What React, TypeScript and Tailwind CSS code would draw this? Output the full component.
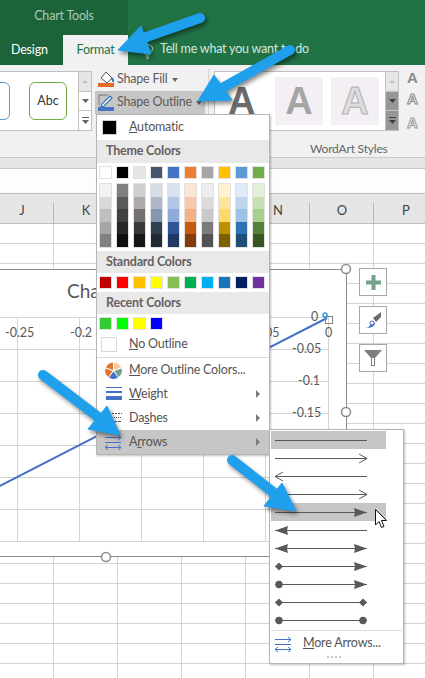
const font = "font-['Lato','Roboto',sans-serif]";
const menuText = "text-[12.5px] tracking-[-0.2px]";

const columns = ["J", "K", "L", "M", "N", "O", "P"];
const rows = Array.from({ length: 23 }, (_, i) => i);

const themeColors = ["#ffffff", "#000000", "#e7e6e6", "#44546a", "#4472c4", "#ed7d31", "#a5a5a5", "#ffc000", "#5b9bd5", "#70ad47"];
const themeShades = [
  ["#f2f2f2", "#d9d9d9", "#bfbfbf", "#a6a6a6", "#808080"],
  ["#7f7f7f", "#595959", "#404040", "#262626", "#0d0d0d"],
  ["#d0cece", "#aeaaaa", "#757070", "#3a3838", "#171616"],
  ["#d6dce4", "#adb9ca", "#8497b0", "#323f4f", "#222b35"],
  ["#d9e2f3", "#b4c6e7", "#8eaadb", "#2f5496", "#1f3864"],
  ["#fbe5d5", "#f7caac", "#f4b183", "#c55a11", "#833c0b"],
  ["#ededed", "#dbdbdb", "#c9c9c9", "#7b7b7b", "#525252"],
  ["#fff2cc", "#fee599", "#ffd965", "#bf9000", "#7f6000"],
  ["#deeaf6", "#bdd6ee", "#9cc2e5", "#2e74b5", "#1f4e79"],
  ["#e2efd9", "#c5e0b3", "#a8d08d", "#538135", "#375623"],
];
const standardColors = ["#c00000", "#ff0000", "#ffc000", "#ffff00", "#85bf55", "#00b050", "#00b0f0", "#1a75bb", "#002060", "#7030a0"];
const recentColors = ["#32cd32", "#00ff00", "#ffff00", "#0000ff"];

type Head = "none" | "open" | "fill" | "diamond" | "dot";
const arrowStyles: { l: Head; r: Head; on?: boolean }[] = [
  { l: "none", r: "none", on: true },
  { l: "none", r: "open" },
  { l: "open", r: "none" },
  { l: "none", r: "open" },
  { l: "none", r: "fill", on: true },
  { l: "fill", r: "none" },
  { l: "fill", r: "fill" },
  { l: "diamond", r: "fill" },
  { l: "dot", r: "fill" },
  { l: "diamond", r: "diamond" },
  { l: "dot", r: "dot" },
];

function Swatch({ color }: { color: string }) {
  return <div className="w-[13px] h-[13px] border border-[#e1e1e1]" style={{ backgroundColor: color }} />;
}

function MenuHeader({ children }: { children: string }) {
  return (
    <div className={`h-[22px] bg-[#e9e9e9] pl-[9px] flex items-center font-bold text-[#666060] ${menuText}`}>
      {children}
    </div>
  );
}

function Caret() {
  return <div className="w-0 h-0 border-y-[4px] border-y-transparent border-l-[4px] border-l-[#7a7a7a]" />;
}

function MenuRow({ icon, children, sub, active }: { icon?: React.ReactNode; children: React.ReactNode; sub?: boolean; active?: boolean }) {
  return (
    <div className={`h-6 flex items-center text-[#555] ${menuText} ${active ? "bg-[#c6c6c6]" : ""}`}>
      <div className="w-[32px] flex justify-center pl-[1px]">{icon}</div>
      <div className="flex-1">{children}</div>
      {sub && <div className="mr-[9px]"><Caret /></div>}
    </div>
  );
}

function ArrowsIcon() {
  return (
    <svg width="17" height="16" viewBox="0 0 17 16" fill="none" stroke="#4472c4" strokeWidth="1">
      <path d="M0 3.500H16M13 1l3 2.500L13 6" />
      <path d="M0 8.500H16" />
      <path d="M0 13.500H16M3 11L0 13.500l3 2.500M13 11l3 2.500-3 2.500" />
    </svg>
  );
}

function HeadShape({ kind, x, dir }: { kind: Head; x: number; dir: 1 | -1 }) {
  const c = "#595959";
  if (kind === "open") return <path d={`M${x - dir * 8} 5L${x} 9.500L${x - dir * 8} 14`} fill="none" stroke={c} strokeWidth="1" />;
  if (kind === "fill") return <path d={`M${x - dir * 13} 5L${x} 9.500L${x - dir * 13} 14L${x - dir * 12} 9.500Z`} fill={c} />;
  if (kind === "diamond") return <path d={`M${x} 5.500L${x + 4} 9.500L${x} 13.500L${x - 4} 9.500Z`} fill={c} transform={`translate(${-dir * 4} 0)`} />;
  if (kind === "dot") return <circle cx={x - dir * 4} cy="9.500" r="3.700" fill={c} />;
  return null;
}

function LineStyle({ l, r }: { l: Head; r: Head }) {
  return (
    <svg width="96" height="18" viewBox="0 0 96 18">
      <line x1="2" y1="9.500" x2="94" y2="9.500" stroke="#595959" strokeWidth="1" />
      <HeadShape kind={l} x={2} dir={-1} />
      <HeadShape kind={r} x={94} dir={1} />
    </svg>
  );
}

function WordArtA({ className }: { className: string }) {
  return <span className={`font-['Liberation_Sans',sans-serif] leading-none ${className}`}>A</span>;
}

function ScrollColumn({ dark }: { dark?: boolean }) {
  const c = dark ? "#3f3f3f" : "#666";
  const fill = dark ? "bg-[#969696]" : "bg-white";
  return (
    <div className="w-[14px] flex flex-col border border-[#c0c0c0] bg-white">
      <div className="h-[20px] flex items-center justify-center bg-[#e6e6e6] border-b border-[#c0c0c0]">
        <div className="w-0 h-0 border-x-[3px] border-x-transparent border-b-[3px] border-b-[#c0c0c0]" />
      </div>
      <div className={`h-[19px] flex items-center justify-center border-b border-[#c0c0c0] ${fill}`}>
        <svg width="7" height="4"><path d="M0 0h7L3.500 4z" fill={c} /></svg>
      </div>
      <div className={`flex-1 flex items-center justify-center ${fill}`}>
        <svg width="7" height="7"><path d="M0 0h7v1H0zM0 3h7L3.500 7z" fill={c} /></svg>
      </div>
    </div>
  );
}

function Ribbon() {
  return (
    <div className="h-[93px] bg-[#f1f1f1] border-b border-[#c9c9c9] flex items-start relative shrink-0">
      {/* shape styles gallery */}
      <div className="mt-[6px] h-[60px] w-[92px] flex">
        <div className="w-[78px] bg-white border-y border-[#c0c0c0] flex items-center overflow-hidden">
          <div className="w-[37px] h-[38px] -ml-[27px] rounded-[6px] border border-[#5b9bd5] shrink-0" />
          <div className="w-[38px] h-[38px] ml-[19px] rounded-[6px] border border-[#70ad47] shrink-0 flex items-center justify-center text-[12.5px] text-[#333]">
            Abc
          </div>
        </div>
        <ScrollColumn />
      </div>

      {/* fill and outline */}
      <div className={`ml-[3px] mt-[3px] w-[110px] text-[#5c5c5c] whitespace-nowrap ${menuText}`}>
        <div className="h-[23px] flex items-center gap-[3px] pl-[3px]">
          <svg className="shrink-0" width="16" height="17" viewBox="0 0 16 17">
            <path d="M8 1l6 6-5 5-6-5z" fill="#fff" stroke="#555" strokeWidth="1" />
            <path d="M14 7c1 2 1.500 3 1 4" stroke="#2e74b5" strokeWidth="2" fill="none" />
            <rect x="0" y="12" width="16" height="4" fill="#e36c25" />
          </svg>
          <span>Shape Fill</span>
          <svg className="ml-[1px] shrink-0" width="6" height="4"><path d="M0 0h6L3 4z" fill="#666" /></svg>
        </div>
        <div className="h-[23px] bg-[#c6c6c6] flex items-center gap-[3px] pl-[3px]">
          <svg className="shrink-0" width="16" height="17" viewBox="0 0 16 17">
            <path d="M1 1h9M1 1v10" stroke="#777" fill="none" />
            <path d="M4 10l8-8 2 2-8 8-3 1z" fill="#fff" stroke="#2e74b5" strokeWidth="1.200" />
            <rect x="0" y="13" width="16" height="4" fill="#4472c4" />
          </svg>
          <span>Shape Outline</span>
          <svg className="ml-[1px] shrink-0" width="6" height="4"><path d="M0 0h6L3 4z" fill="#555" /></svg>
        </div>
      </div>

      <div className="ml-[3px] mt-[4px] w-px h-[84px] bg-[#d5d5d5]" />

      {/* wordart styles */}
      <div className="ml-[5px] mt-[6px]">
        <div className="h-[60px] flex">
          <div className="w-[171px] bg-white border-y border-l border-[#c0c0c0] flex items-center">
            <WordArtA className="ml-[13px] w-[47px] text-[38px] font-bold text-[#6b6b6b]" />
            <div className="w-[48px] h-[48px] bg-[#f4eff5] flex items-center justify-center">
              <WordArtA className="text-[38px] text-[#a5a5a5] font-bold" />
            </div>
            <div className="ml-[8px] w-[48px] h-[48px] bg-[#f4eff5] flex items-center justify-center">
              <WordArtA className="text-[38px] text-[#dddddd] font-bold [-webkit-text-stroke:1px_#b0b0b0]" />
            </div>
          </div>
          <ScrollColumn dark />
        </div>
        <div className="mt-[10px] ml-[96px] text-[12px] tracking-[-0.2px] leading-4 text-[#666] whitespace-nowrap">WordArt Styles</div>
      </div>

      <div className="ml-[8px] mt-[5px] flex flex-col gap-[6px]">
        <WordArtA className="text-[15px] font-bold text-[#8a8a8a]" />
        <WordArtA className="text-[15px] font-bold text-white [-webkit-text-stroke:1px_#8a8a8a]" />
        <WordArtA className="mt-[3px] text-[15px] font-bold text-white [-webkit-text-stroke:1px_#999]" />
      </div>
    </div>
  );
}

function Chart() {
  const vLines = [17, 79, 141, 203, 265, 328];
  const hLines = [317, 349, 381, 413, 445, 477, 509, 541];
  return (
    <svg className="absolute left-0 top-0" width="425" height="678" viewBox="0 0 425 678">
      <rect x="-5" y="269.500" width="351.500" height="287" fill="#fff" stroke="#8c8c8c" strokeWidth="1" />
      {vLines.map((x) => <line key={x} x1={x + 0.5} y1="317" x2={x + 0.5} y2="541" stroke="#d4d4d4" />)}
      {hLines.map((y) => <line key={y} x1="0" y1={y + 0.5} x2="328" y2={y + 0.5} stroke="#d4d4d4" />)}
      <g fontSize="12.500" fill="#595959" fontFamily="Lato, sans-serif">
        <text x="67" y="298" fontSize="19">Cha</text>
        <text x="5" y="337">-0.25</text>
        <text x="70" y="337">-0.2</text>
        <text x="265" y="337">05</text>
        <text x="325" y="337">0</text>
        <text x="311" y="321">0</text>
        <text x="292" y="353">-0.05</text>
        <text x="298" y="385">-0.1</text>
        <text x="292" y="417">-0.15</text>
      </g>
      <line x1="-2" y1="487" x2="327" y2="318" stroke="#4472c4" strokeWidth="2" />
      <rect x="325.500" y="316.500" width="7" height="7" fill="none" stroke="#7f7f7f" />
      <circle cx="325" cy="315" r="2" fill="none" stroke="#2e9bd8" strokeWidth="1.500" />
      {[[346, 269], [346, 412], [106, 557]].map(([x, y]) => (
        <circle key={y} cx={x} cy={y} r="4.500" fill="#fff" stroke="#8c8c8c" strokeWidth="1.500" />
      ))}
    </svg>
  );
}

function ChartButtons() {
  return (
    <div className="absolute left-[359px] top-[268px] flex flex-col gap-[10px]">
      <div className="w-[28px] h-[28px] bg-white border border-[#a6a6a6] flex items-center justify-center">
        <svg width="15" height="15"><path d="M5.500 0h4v5.500H15v4H9.500V15h-4V9.500H0v-4h5.500z" fill="#73a28d" /></svg>
      </div>
      <div className="w-[28px] h-[28px] bg-white border border-[#a6a6a6] flex items-center justify-center">
        <svg width="18" height="18" viewBox="0 0 18 18">
          <path d="M9 7l8-6v5l-5 5z" fill="#6b6b6b" />
          <path d="M1 17c3 0 4-1 5-3 1-2 2-3 3-3l2 1c0 3-3 5-10 5z" fill="#4472c4" />
          <circle cx="8" cy="12" r="2" fill="#fff" stroke="#4472c4" />
        </svg>
      </div>
      <div className="w-[28px] h-[28px] bg-white border border-[#a6a6a6] flex items-center justify-center">
        <svg width="18" height="18" viewBox="0 0 18 18">
          <path d="M0 1h18L11 9v8H7V9z" fill="#7f7f7f" />
          <path d="M8 9h2v7H8z" fill="#fff" />
        </svg>
      </div>
    </div>
  );
}

function ColorMenu() {
  return (
    <div className="absolute left-[96px] top-[114px] w-[174px] h-[341px] bg-white border border-[#b5b5b5] shadow-[1px_1px_2px_rgba(0,0,0,0.25)]">
      <div className={`h-[25px] flex items-center text-[#555] ${menuText}`}>
        <div className="ml-[5px] w-[15px] h-[15px] bg-black border border-[#d0d0d0]" />
        <span className="ml-[12px]"><span className="underline">A</span>utomatic</span>
      </div>
      <div className={`h-[23px] bg-[#e9e9e9] pl-[9px] flex items-center font-bold text-[#666060] ${menuText}`}>Theme Colors</div>
      <div className="mt-[3px] ml-[2px] flex gap-[4px]">
        {themeColors.map((c) => <Swatch key={c} color={c} />)}
      </div>
      <div className="mt-[4px] ml-[2px] flex gap-[4px]">
        {themeShades.map((col, i) => (
          <div key={i} className="w-[13px] h-[65px] border border-[#e1e1e1] flex flex-col">
            {col.map((c) => <div key={c} className="flex-1" style={{ backgroundColor: c }} />)}
          </div>
        ))}
      </div>
      <div className="mt-[3px]"><MenuHeader>Standard Colors</MenuHeader></div>
      <div className="mt-[3px] ml-[2px] flex gap-[4px]">
        {standardColors.map((c) => <Swatch key={c} color={c} />)}
      </div>
      <div className="mt-[3px]"><MenuHeader>Recent Colors</MenuHeader></div>
      <div className="mt-[3px] ml-[2px] flex gap-[4px]">
        {recentColors.map((c) => <Swatch key={c} color={c} />)}
      </div>
      <div className={`mt-[2px] h-[26px] flex items-center text-[#555] border-b border-[#dcdcdc] ${menuText}`}>
        <div className="ml-[4px] w-[16px] h-[15px] bg-white border border-[#d9d9d9]" />
        <span className="ml-[12px]"><span className="underline">N</span>o Outline</span>
      </div>
      <MenuRow
        icon={
          <svg width="17" height="17" viewBox="-8.500 -8.500 17 17">
            <path d="M-.5 -.5V-8A8 8 0 0 0 -7.500 -3z" fill="#e0752e" />
            <path d="M.5 -.5V-8A8 8 0 0 1 7.500 -3z" fill="#f4c8a0" />
            <path d="M1 .5L8 -2A8 8 0 0 1 5 6.500z" fill="#70a08d" />
            <path d="M0 1L4.500 7A8 8 0 0 1 -4.500 7z" fill="#4472c4" />
            <path d="M-1 .5L-8 -2A8 8 0 0 0 -5 6.500z" fill="#e0752e" />
          </svg>
        }
      >
        <span className="underline">M</span>ore Outline Colors...
      </MenuRow>
      <MenuRow
        sub
        icon={
          <svg width="16" height="14" viewBox="0 0 16 14">
            <rect y="0" width="16" height="1" fill="#4472c4" />
            <rect y="4" width="16" height="2" fill="#4472c4" />
            <rect y="9" width="16" height="4" fill="#4472c4" />
          </svg>
        }
      >
        <span className="underline">W</span>eight
      </MenuRow>
      <MenuRow
        sub
        icon={
          <svg width="16" height="14" viewBox="0 0 16 14" stroke="#555" strokeWidth="1">
            <path d="M0 2.500h16" strokeDasharray="2 1" />
            <path d="M0 6.500h16" strokeDasharray="1 1" />
            <path d="M0 10.500h16" strokeDasharray="3 1" />
          </svg>
        }
      >
        Da<span className="underline">s</span>hes
      </MenuRow>
      <MenuRow sub active icon={<ArrowsIcon />}>
        A<span className="underline">r</span>rows
      </MenuRow>
    </div>
  );
}

function ArrowsMenu() {
  return (
    <div className="absolute left-[269px] top-[429px] w-[135px] h-[235px] bg-white border border-[#b5b5b5] shadow-[1px_1px_2px_rgba(0,0,0,0.25)] pt-[1px] pl-[1px]">
      {arrowStyles.map((s, i) => (
        <div key={i} className={`h-[18px] w-[115px] pl-[2px] ${s.on ? "bg-[#c6c6c6]" : ""}`}>
          <LineStyle l={s.l} r={s.r} />
        </div>
      ))}
      <div className={`mt-[1px] mr-[1px] border-t border-[#dcdcdc] h-[26px] flex items-center pl-[4px] text-[#555] ${menuText}`}>
        <ArrowsIcon />
        <span className="ml-[11px]"><span className="underline">M</span>ore Arrows...</span>
      </div>
      <div className="flex justify-center gap-[2px] mr-[6px]">
        {[0, 1, 2, 3].map((d) => <div key={d} className="w-[2px] h-[2px] bg-[#c8c8c8]" />)}
      </div>
    </div>
  );
}

function BlueArrows() {
  const blue = "#1ea0ec";
  const items = [
    { tail: "M200 18L138 40", head: "M118 50L141 26L151 54Z" },
    { tail: "M290 50L222 88", head: "M198 101L214 75L232 100Z" },
    { tail: "M43 375L102 420", head: "M120 435L107 406L88 429Z" },
    { tail: "M232 460L278 496", head: "M296 511L282 483L264 506Z" },
  ];
  return (
    <svg className="absolute left-0 top-0 drop-shadow-[2px_3px_2px_rgba(0,0,0,0.45)]" width="425" height="678" viewBox="0 0 425 678">
      {items.map((a) => (
        <g key={a.head}>
          <path d={a.tail} stroke={blue} strokeWidth="10" strokeLinecap="round" fill="none" />
          <path d={a.head} fill={blue} stroke={blue} strokeLinejoin="round" />
        </g>
      ))}
    </svg>
  );
}

function Cursor() {
  return (
    <svg className="absolute left-[375px] top-[509px]" width="13" height="20" viewBox="0 0 13 20">
      <path d="M.5 .5V16L4 12.500L6.500 18.500L9 17.500L6.500 11.500H11.500Z" fill="#fff" stroke="#111" strokeWidth="1" />
    </svg>
  );
}

export default function App() {
  return (
    <div className={`relative w-[425px] h-[678px] overflow-hidden bg-white flex flex-col ${font}`}>
      {/* title and tabs */}
      <div className="h-[65px] bg-[#217346] flex shrink-0">
        <div className="w-[128px] bg-[#1c6339] flex flex-col">
          <div className={`h-[35px] pt-[7px] text-center text-[#a8cbb7] ${menuText}`}>Chart Tools</div>
          <div className={`h-[30px] flex ${menuText}`}>
            <div className="w-[63px] pl-[11px] flex items-center text-white">Design</div>
            <div className="w-[65px] bg-[#f1f1f1] flex items-center justify-center text-[#217346]">Format</div>
          </div>
        </div>
        <div className={`flex items-end h-full pl-[14px] pb-[6px] text-[#d6e6dc] gap-[7px] ${menuText}`}>
          <svg width="11" height="15" viewBox="0 0 11 15" fill="none" stroke="#d6e6dc">
            <path d="M3 10c0-2-2.500-3-2.500-5.500a5 4 0 0 1 10 0C10.500 7 8 8 8 10zM3.500 12h4M4 14h3" />
          </svg>
          <span>Tell me what you want to do</span>
        </div>
      </div>

      <Ribbon />

      {/* formula bar */}
      <div className="h-[11px] bg-[#e6e6e6] border-b border-[#c9c9c9] shrink-0" />
      <div className="h-[24px] bg-[#fdfdfd] shrink-0" />

      {/* column headers */}
      <div className="h-[31px] bg-[#e6e6e6] border-y border-[#bdbdbd] flex -ml-[10px] shrink-0">
        {columns.map((c) => (
          <div key={c} className="w-[64px] h-full flex items-end justify-center relative shrink-0 text-[13px] text-[#444] pb-[3px]">
            {c}
            <div className="absolute right-0 bottom-0 w-px h-[20px] bg-[#b5b5b5]" />
          </div>
        ))}
      </div>

      {/* sheet cells */}
      <div className="-ml-[10px] shrink-0">
        {rows.map((r) => (
          <div key={r} className="flex">
            {columns.map((c) => (
              <div key={c} className="w-[64px] h-5 shrink-0 border-r border-b border-[#d4d4d4]" />
            ))}
          </div>
        ))}
      </div>

      <Chart />
      <ChartButtons />
      <ColorMenu />
      <ArrowsMenu />
      <BlueArrows />
      <Cursor />
    </div>
  );
}
